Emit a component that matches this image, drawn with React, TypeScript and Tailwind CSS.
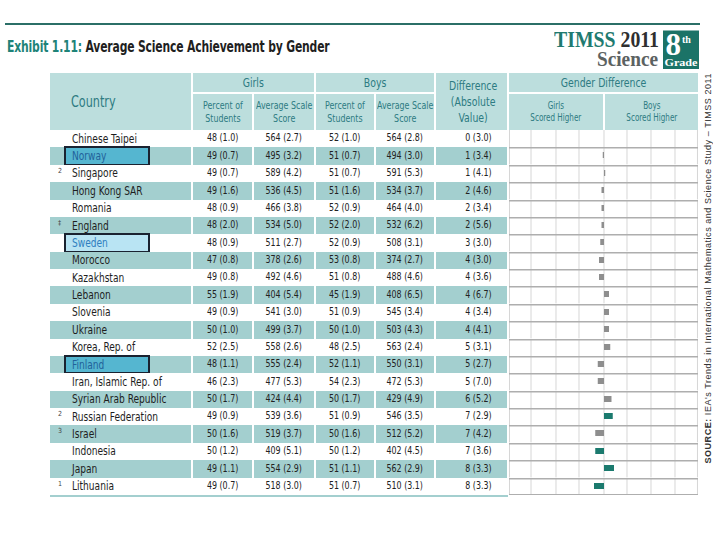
const cond = "font-['Liberation_Sans_Narrow','DejaVu_Sans_Condensed',sans-serif]";
const squeeze = 'inline-block whitespace-nowrap scale-x-[0.8]';

type Row = {
  name: string;
  mark?: string;
  g1: string;
  g2: string;
  b1: string;
  b2: string;
  diff: string;
  bar: number;
  sig?: boolean;
  box?: 'dark' | 'light';
};

const rows: Row[] = [
  { name: 'Chinese Taipei', g1: '48 (1.0)', g2: '564 (2.7)', b1: '52 (1.0)', b2: '564 (2.8)', diff: '0 (3.0)', bar: 0 },
  { name: 'Norway', g1: '49 (0.7)', g2: '495 (3.2)', b1: '51 (0.7)', b2: '494 (3.0)', diff: '1 (3.4)', bar: -1, box: 'dark' },
  { name: 'Singapore', mark: '2', g1: '49 (0.7)', g2: '589 (4.2)', b1: '51 (0.7)', b2: '591 (5.3)', diff: '1 (4.1)', bar: 1 },
  { name: 'Hong Kong SAR', g1: '49 (1.6)', g2: '536 (4.5)', b1: '51 (1.6)', b2: '534 (3.7)', diff: '2 (4.6)', bar: -2 },
  { name: 'Romania', g1: '48 (0.9)', g2: '466 (3.8)', b1: '52 (0.9)', b2: '464 (4.0)', diff: '2 (3.4)', bar: -2 },
  { name: 'England', mark: '‡', g1: '48 (2.0)', g2: '534 (5.0)', b1: '52 (2.0)', b2: '532 (6.2)', diff: '2 (5.6)', bar: -2 },
  { name: 'Sweden', g1: '48 (0.9)', g2: '511 (2.7)', b1: '52 (0.9)', b2: '508 (3.1)', diff: '3 (3.0)', bar: -3, box: 'light' },
  { name: 'Morocco', g1: '47 (0.8)', g2: '378 (2.6)', b1: '53 (0.8)', b2: '374 (2.7)', diff: '4 (3.0)', bar: -4 },
  { name: 'Kazakhstan', g1: '49 (0.8)', g2: '492 (4.6)', b1: '51 (0.8)', b2: '488 (4.6)', diff: '4 (3.6)', bar: -4 },
  { name: 'Lebanon', g1: '55 (1.9)', g2: '404 (5.4)', b1: '45 (1.9)', b2: '408 (6.5)', diff: '4 (6.7)', bar: 4 },
  { name: 'Slovenia', g1: '49 (0.9)', g2: '541 (3.0)', b1: '51 (0.9)', b2: '545 (3.4)', diff: '4 (3.4)', bar: 4 },
  { name: 'Ukraine', g1: '50 (1.0)', g2: '499 (3.7)', b1: '50 (1.0)', b2: '503 (4.3)', diff: '4 (4.1)', bar: 4 },
  { name: 'Korea, Rep. of', g1: '52 (2.5)', g2: '558 (2.6)', b1: '48 (2.5)', b2: '563 (2.4)', diff: '5 (3.1)', bar: 5 },
  { name: 'Finland', g1: '48 (1.1)', g2: '555 (2.4)', b1: '52 (1.1)', b2: '550 (3.1)', diff: '5 (2.7)', bar: -5, box: 'dark' },
  { name: 'Iran, Islamic Rep. of', g1: '46 (2.3)', g2: '477 (5.3)', b1: '54 (2.3)', b2: '472 (5.3)', diff: '5 (7.0)', bar: -5 },
  { name: 'Syrian Arab Republic', g1: '50 (1.7)', g2: '424 (4.4)', b1: '50 (1.7)', b2: '429 (4.9)', diff: '6 (5.2)', bar: 6 },
  { name: 'Russian Federation', mark: '2', g1: '49 (0.9)', g2: '539 (3.6)', b1: '51 (0.9)', b2: '546 (3.5)', diff: '7 (2.9)', bar: 7, sig: true },
  { name: 'Israel', mark: '3', g1: '50 (1.6)', g2: '519 (3.7)', b1: '50 (1.6)', b2: '512 (5.2)', diff: '7 (4.2)', bar: -7 },
  { name: 'Indonesia', g1: '50 (1.2)', g2: '409 (5.1)', b1: '50 (1.2)', b2: '402 (4.5)', diff: '7 (3.6)', bar: -7, sig: true },
  { name: 'Japan', g1: '49 (1.1)', g2: '554 (2.9)', b1: '51 (1.1)', b2: '562 (2.9)', diff: '8 (3.3)', bar: 8, sig: true },
  { name: 'Lithuania', mark: '1', g1: '49 (0.7)', g2: '518 (3.0)', b1: '51 (0.7)', b2: '510 (3.1)', diff: '8 (3.3)', bar: -8, sig: true },
];

const gridLines = [0.5, 22, 47, 70, 95, 118, 142, 166, 188.5];

function ChartCell({ value, sig, first, last }: { value: number; sig?: boolean; first: boolean; last: boolean }) {
  const w = Math.abs(value) * 1.25;
  const x = value < 0 ? 95 - w : 95;
  return (
    <svg width="189" height="17.38" viewBox="0 0 189 17.38" className="block">
      {gridLines.map((gx) => (
        <line key={gx} x1={gx} x2={gx} y1={0} y2={17.38} stroke="#d6d6d6" strokeWidth="1" />
      ))}
      {!first && <line x1={0} x2={189} y1={0.7} y2={0.7} stroke="#aeaeae" strokeWidth="1.5" />}
      {last && <line x1={0} x2={189} y1={16.7} y2={16.7} stroke="#aeaeae" strokeWidth="1.5" />}
      {value !== 0 && <rect x={x} y={5} width={w} height={6} fill={sig ? '#1b7a6e' : '#8e8e8e'} />}
    </svg>
  );
}

function Logo() {
  return (
    <svg width="146" height="48" viewBox="0 0 146 48" className="block">
      <text
        x="0"
        y="21.7"
        fontFamily="'Liberation Serif', serif"
        fontWeight="bold"
        fontSize="24"
        textLength="105"
        lengthAdjust="spacingAndGlyphs"
      >
        <tspan fill="#1f7a70">TIMSS</tspan>
        <tspan fill="#2f2f2f"> 2011</tspan>
      </text>
      <text
        x="43"
        y="40.7"
        fontFamily="'Liberation Serif', serif"
        fontWeight="bold"
        fontSize="22"
        fill="#5c6262"
        textLength="61"
        lengthAdjust="spacingAndGlyphs"
      >
        Science
      </text>
      <rect x="109" y="5.5" width="36" height="38.5" fill="#1b7367" />
      <text x="111.5" y="30" fontFamily="'Liberation Serif', serif" fontWeight="bold" fontSize="31" fill="#ffffff">
        8
      </text>
      <text x="128" y="18" fontFamily="'Liberation Serif', serif" fontWeight="bold" fontSize="10" fill="#ffffff">
        th
      </text>
      <text
        x="110.5"
        y="41"
        fontFamily="'Liberation Serif', serif"
        fontWeight="bold"
        fontSize="9.5"
        fill="#ffffff"
        textLength="33"
        lengthAdjust="spacingAndGlyphs"
      >
        Grade
      </text>
    </svg>
  );
}

const boxStyles = {
  dark: 'bg-[#55b6d0] text-[#22629a]',
  light: 'bg-[#b9e4f3] text-[#2f7fc0]',
};

function Head({ lines, size }: { lines: string[]; size: string }) {
  return (
    <div className={`bg-[#bcdedd] text-[#2d7b82] flex items-center justify-center text-center h-full ${size}`}>
      <div className="inline-flex flex-col items-center whitespace-nowrap scale-x-[0.8]">
        {lines.map((l) => (
          <span key={l}>{l}</span>
        ))}
      </div>
    </div>
  );
}

export default function App() {
  return (
    <div className="w-[720px] h-[540px] bg-white overflow-hidden">
      <div className="ml-[5px] mt-[23px] w-[695px] h-[2px] bg-[#2b6f67]" />

      <div className="flex items-start justify-between w-[700px]">
        <h1
          className={`${cond} ml-[7px] mt-[13px] text-[15px] leading-[18px] font-bold tracking-[-0.2px] text-[#1f1f1f] whitespace-nowrap origin-left scale-x-[0.8]`}
        >
          <span className="text-[#1e8378]">Exhibit 1.11:</span> Average Science Achievement by Gender
        </h1>
        <Logo />
      </div>

      <div className="flex items-start ml-[50px]">
        <div className={`${cond} w-[648px]`}>
          <div className="grid grid-cols-[141px_59px_60px_58px_58px_71px_94px_93px] grid-rows-[19px_36px] gap-[2px]">
            <div className="row-span-2 bg-[#bcdedd] text-[#2d7b82] flex items-center pl-[21px] text-[16px]">
              <span className="inline-block origin-left scale-x-[0.78]">Country</span>
            </div>
            <div className="col-span-2">
              <Head lines={['Girls']} size="text-[13px]" />
            </div>
            <div className="col-span-2">
              <Head lines={['Boys']} size="text-[13px]" />
            </div>
            <div className="row-span-2 pl-[4px] bg-[#bcdedd]">
              <Head lines={['Difference', '(Absolute', 'Value)']} size="text-[13px] leading-[16px]" />
            </div>
            <div className="col-span-2">
              <Head lines={['Gender Difference']} size="text-[13px]" />
            </div>
            <Head lines={['Percent of', 'Students']} size="text-[11px] leading-[13px]" />
            <Head lines={['Average Scale', 'Score']} size="text-[11px] leading-[13px]" />
            <Head lines={['Percent of', 'Students']} size="text-[11px] leading-[13px]" />
            <Head lines={['Average Scale', 'Score']} size="text-[11px] leading-[13px]" />
            <Head lines={['Girls', 'Scored Higher']} size="text-[10px] leading-[12px]" />
            <Head lines={['Boys', 'Scored Higher']} size="text-[10px] leading-[12px]" />
          </div>

          {rows.map((r, i) => {
            const bg = i % 2 === 1 ? 'bg-[#a3cfcf]' : 'bg-white';
            const cell = `${bg} flex items-center justify-center text-[11px] text-[#222] h-[17.38px]`;
            return (
              <div key={r.name} className="grid grid-cols-[141px_59px_60px_58px_58px_71px_189px] gap-x-[2px] h-[17.38px]">
                <div className={`${bg} relative flex items-center pl-[8px] text-[12px] text-[#1e1e1e] h-[17.38px]`}>
                  <span className="w-[14px] self-start pt-[2px] text-[7px] leading-[8px] text-[#444]">{r.mark}</span>
                  <span className="inline-block whitespace-nowrap origin-left scale-x-[0.84]">{r.name}</span>
                  {r.box && (
                    <span
                      className={`absolute left-[14px] top-[-1px] w-[86px] h-[19.5px] border-2 border-[#1a2230] pl-[6px] flex items-center ${boxStyles[r.box]}`}
                    >
                      <span className="inline-block whitespace-nowrap origin-left scale-x-[0.84]">{r.name}</span>
                    </span>
                  )}
                </div>
                <div className={cell}>
                  <span className={squeeze}>{r.g1}</span>
                </div>
                <div className={cell}>
                  <span className={squeeze}>{r.g2}</span>
                </div>
                <div className={cell}>
                  <span className={squeeze}>{r.b1}</span>
                </div>
                <div className={cell}>
                  <span className={squeeze}>{r.b2}</span>
                </div>
                <div className={`${cell} pl-[14px]`}>
                  <span className={squeeze}>{r.diff}</span>
                </div>
                <div className="bg-white h-[17.38px]">
                  <ChartCell value={r.bar} sig={r.sig} first={i === 0} last={i === rows.length - 1} />
                </div>
              </div>
            );
          })}
          <div className="w-[458px] h-[2px] bg-[#a3cfcf]" />
        </div>

        <div className="ml-[5px] [writing-mode:vertical-rl] rotate-180 font-['Liberation_Sans',sans-serif] text-[9px] leading-[10px] tracking-[0.55px] text-[#333] whitespace-nowrap">
          <span className="font-bold">SOURCE:</span> IEA's Trends in International Mathematics and Science Study – TIMSS 2011
        </div>
      </div>
    </div>
  );
}
